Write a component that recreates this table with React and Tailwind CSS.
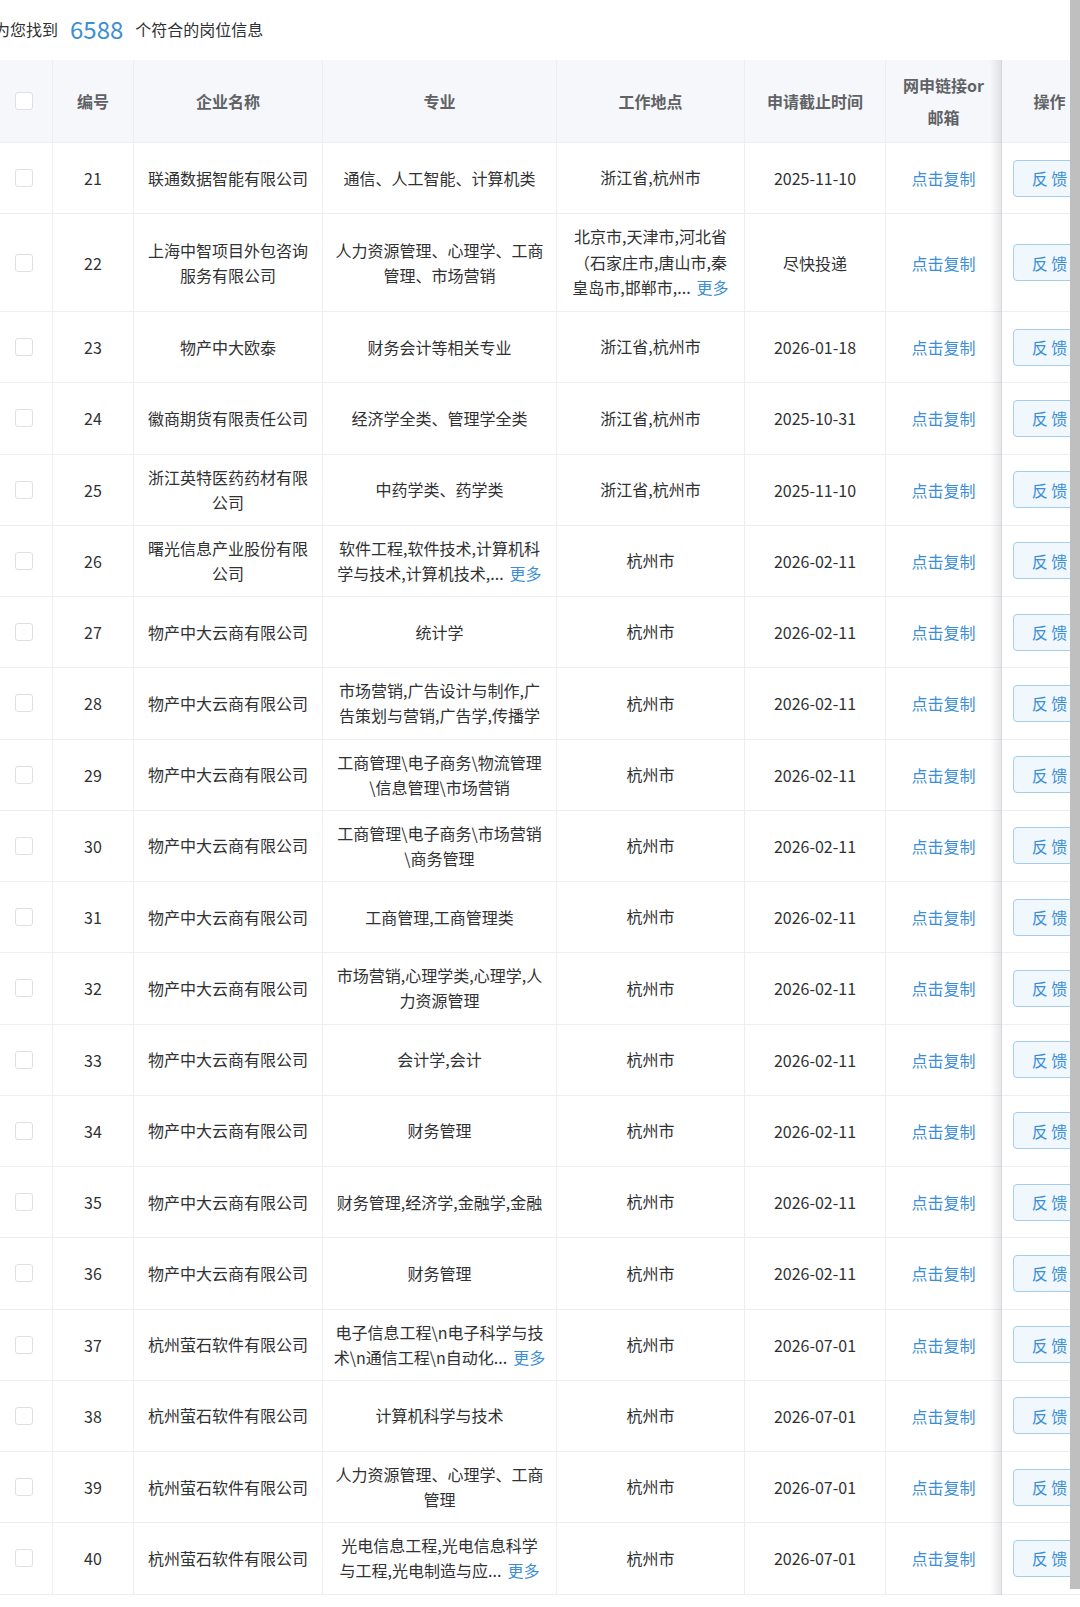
import React from "react";

const rows = [
  { id: 21, co: ["联通数据智能有限公司"], major: ["通信、人工智能、计算机类"], loc: ["浙江省,杭州市"], date: "2025-11-10" },
  { id: 22, co: ["上海中智项目外包咨询", "服务有限公司"], major: ["人力资源管理、心理学、工商", "管理、市场营销"], loc: ["北京市,天津市,河北省", "（石家庄市,唐山市,秦", "皇岛市,邯郸市,..."], locMore: true, date: "尽快投递", tall: true },
  { id: 23, co: ["物产中大欧泰"], major: ["财务会计等相关专业"], loc: ["浙江省,杭州市"], date: "2026-01-18" },
  { id: 24, co: ["徽商期货有限责任公司"], major: ["经济学全类、管理学全类"], loc: ["浙江省,杭州市"], date: "2025-10-31" },
  { id: 25, co: ["浙江英特医药药材有限", "公司"], major: ["中药学类、药学类"], loc: ["浙江省,杭州市"], date: "2025-11-10" },
  { id: 26, co: ["曙光信息产业股份有限", "公司"], major: ["软件工程,软件技术,计算机科", "学与技术,计算机技术,..."], majorMore: true, loc: ["杭州市"], date: "2026-02-11" },
  { id: 27, co: ["物产中大云商有限公司"], major: ["统计学"], loc: ["杭州市"], date: "2026-02-11" },
  { id: 28, co: ["物产中大云商有限公司"], major: ["市场营销,广告设计与制作,广", "告策划与营销,广告学,传播学"], loc: ["杭州市"], date: "2026-02-11" },
  { id: 29, co: ["物产中大云商有限公司"], major: ["工商管理\\电子商务\\物流管理", "\\信息管理\\市场营销"], loc: ["杭州市"], date: "2026-02-11" },
  { id: 30, co: ["物产中大云商有限公司"], major: ["工商管理\\电子商务\\市场营销", "\\商务管理"], loc: ["杭州市"], date: "2026-02-11" },
  { id: 31, co: ["物产中大云商有限公司"], major: ["工商管理,工商管理类"], loc: ["杭州市"], date: "2026-02-11" },
  { id: 32, co: ["物产中大云商有限公司"], major: ["市场营销,心理学类,心理学,人", "力资源管理"], loc: ["杭州市"], date: "2026-02-11" },
  { id: 33, co: ["物产中大云商有限公司"], major: ["会计学,会计"], loc: ["杭州市"], date: "2026-02-11" },
  { id: 34, co: ["物产中大云商有限公司"], major: ["财务管理"], loc: ["杭州市"], date: "2026-02-11" },
  { id: 35, co: ["物产中大云商有限公司"], major: ["财务管理,经济学,金融学,金融"], loc: ["杭州市"], date: "2026-02-11" },
  { id: 36, co: ["物产中大云商有限公司"], major: ["财务管理"], loc: ["杭州市"], date: "2026-02-11" },
  { id: 37, co: ["杭州萤石软件有限公司"], major: ["电子信息工程\\n电子科学与技", "术\\n通信工程\\n自动化..."], majorMore: true, loc: ["杭州市"], date: "2026-07-01" },
  { id: 38, co: ["杭州萤石软件有限公司"], major: ["计算机科学与技术"], loc: ["杭州市"], date: "2026-07-01" },
  { id: 39, co: ["杭州萤石软件有限公司"], major: ["人力资源管理、心理学、工商", "管理"], loc: ["杭州市"], date: "2026-07-01" },
  { id: 40, co: ["杭州萤石软件有限公司"], major: ["光电信息工程,光电信息科学", "与工程,光电制造与应..."], majorMore: true, loc: ["杭州市"], date: "2026-07-01" },
];

function Lines({ lines, more, leading = "leading-[25px]" }) {
  return (
    <div className={`flex flex-col items-center ${leading}`}>
      {lines.map((l, i) => (
        <span key={i} className="whitespace-nowrap">
          {l}
          {more && i === lines.length - 1 ? (
            <span className="text-[#3b8ed6] ml-[6px]">更多</span>
          ) : null}
        </span>
      ))}
    </div>
  );
}

function Checkbox() {
  return <div className="w-[18px] h-[18px] border border-[#dcdfe6] rounded-[3px] bg-white" />;
}

const cell = "flex items-center justify-center text-center border-r border-b border-[#ebeef5]";
const grid = "grid grid-cols-[53px_81px_189px_234px_188px_141px_116px_96px] w-[1098px]";

export default function App() {
  return (
    <div className="w-[1080px] h-[1607px] bg-white relative overflow-hidden font-['Noto_Sans_CJK_SC','Noto_Sans',sans-serif] text-[#303133] text-[16px]">
      <div className="h-[60px] flex items-center pb-[2px] ml-[-6px] text-[#303133]">
        <span>为您找到</span>
        <span className="text-[24px] text-[#3d8fd1] mx-[12px] leading-none">6588</span>
        <span>个符合的岗位信息</span>
      </div>

      <div className="relative w-[1098px]">
        <div className={`${grid} h-[83px] bg-[#f5f7fa] text-[#606266] font-bold`}>
          <div className={`${cell} justify-start pl-[15px]`}>
            <Checkbox />
          </div>
          <div className={cell}>编号</div>
          <div className={cell}>企业名称</div>
          <div className={cell}>专业</div>
          <div className={cell}>工作地点</div>
          <div className={cell}>申请截止时间</div>
          <div className={`${cell} leading-[32px]`}>
            <div className="flex flex-col items-center">
              <span>网申链接or</span>
              <span>邮箱</span>
            </div>
          </div>
          <div className={`${cell} bg-[#f5f7fa]`}>操作</div>
        </div>

        {rows.map((r) => (
          <div
            key={r.id}
            className={`${grid} ${r.tall ? "h-[98px]" : r.id === 21 ? "h-[71px]" : "h-[71.25px]"} bg-white`}
          >
            <div className={`${cell} justify-start pl-[15px]`}>
              <Checkbox />
            </div>
            <div className={cell}>{r.id}</div>
            <div className={cell}>
              <Lines lines={r.co} />
            </div>
            <div className={cell}>
              <Lines lines={r.major} more={r.majorMore} />
            </div>
            <div className={cell}>
              <Lines lines={r.loc} more={r.locMore} leading="leading-[25.5px]" />
            </div>
            <div className={cell}>{r.date}</div>
            <div className={`${cell} text-[#3b8ed6]`}>点击复制</div>
            <div className={`${cell} bg-white`}>
              <button className="w-[74px] h-[37px] border border-[#a6cdee] bg-[#f0f7fd] text-[#3b8ed6] rounded-[4px] text-[16px] leading-none">
                反 馈
              </button>
            </div>
          </div>
        ))}

        <div className="absolute top-0 bottom-0 left-[990px] w-[12px] bg-linear-to-r from-transparent to-black/10 pointer-events-none" />
      </div>

      <div className="absolute right-0 top-0 w-[10px] h-[1589px] bg-[#bfbfbf]" />
    </div>
  );
}
